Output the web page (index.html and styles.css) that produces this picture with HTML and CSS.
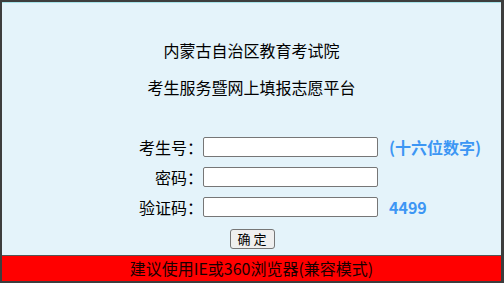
FILE: index.html
```html
<!DOCTYPE html>
<html lang="zh-CN">
<head>
    <meta charset="UTF-8">
    <meta name="viewport" content="width=device-width, initial-scale=1.0">
    <title>内蒙古自治区教育考试院 - 考生服务暨网上填报志愿平台</title>
    <link rel="stylesheet" href="styles.css">
</head>
<body>
    <div class="container">
        <div class="login-box">
            <p class="titulo">内蒙古自治区教育考试院</p>
            <p class="titulo titulo-sub">考生服务暨网上填报志愿平台</p>

            <form class="login-form" onsubmit="return false;">
                <label class="campo-label" for="ksh">考生号：</label>
                <input class="campo" type="text" id="ksh" name="ksh">
                <span class="dica">(十六位数字)</span>

                <label class="campo-label" for="mm">密码：</label>
                <input class="campo" type="password" id="mm" name="mm">
                <span></span>

                <label class="campo-label" for="yzm">验证码：</label>
                <input class="campo" type="text" id="yzm" name="yzm">
                <span class="dica">4499</span>
            </form>

            <div class="acoes">
                <button class="btn-ok" type="button">确 定</button>
            </div>
        </div>

        <div class="aviso">建议使用IE或360浏览器(兼容模式)</div>
    </div>
</body>
</html>
```

FILE: styles.css
```css
* {
    margin: 0;
    padding: 0;
    box-sizing: border-box;
}

body {
    font-family: "Noto Sans CJK SC", "Noto Sans", sans-serif;
    background: #e4f3fa;
    color: #000;
}

.container {
    width: 504px;
    height: 283px;
    border: 2px solid #3d3d3d;
    border-right-width: 3px;
    display: flex;
    flex-direction: column;
    overflow: hidden;
}

.login-box {
    background: #e4f3fa;
    border-top: 1px solid #a6e2e8;
    padding: 37px 0 6px;
    border-bottom: 1px solid #555;
}

.titulo {
    text-align: center;
    font-size: 16px;
    line-height: 20px;
}

.titulo-sub {
    margin-top: 17px;
}

.login-form {
    display: grid;
    grid-template-columns: 77px 175px auto;
    grid-auto-rows: 20px;
    row-gap: 10px;
    align-items: center;
    margin-top: 40px;
    padding-left: 124px;
}

.campo-label {
    text-align: right;
    font-size: 16px;
    line-height: 20px;
    white-space: nowrap;
}

.campo {
    width: 175px;
    height: 20px;
    border: 1px solid #767676;
    border-radius: 2px;
    background: #fff;
    outline: none;
}

.dica {
    margin-left: 11px;
    color: #3c96f4;
    font-weight: bold;
    font-size: 16px;
    line-height: 20px;
}

.acoes {
    display: flex;
    justify-content: center;
    margin-top: 12px;
    padding-left: 1px;
}

.btn-ok {
    width: 45px;
    height: 20px;
    font-family: inherit;
    font-size: 13px;
    line-height: 18px;
    background: #efefef;
    border: 1px solid #767676;
    border-radius: 3px;
    color: #000;
}

.aviso {
    flex: 1;
    background: #ff0000;
    color: #1a0000;
    text-align: center;
    font-size: 16px;
    line-height: 24px;
}
```
